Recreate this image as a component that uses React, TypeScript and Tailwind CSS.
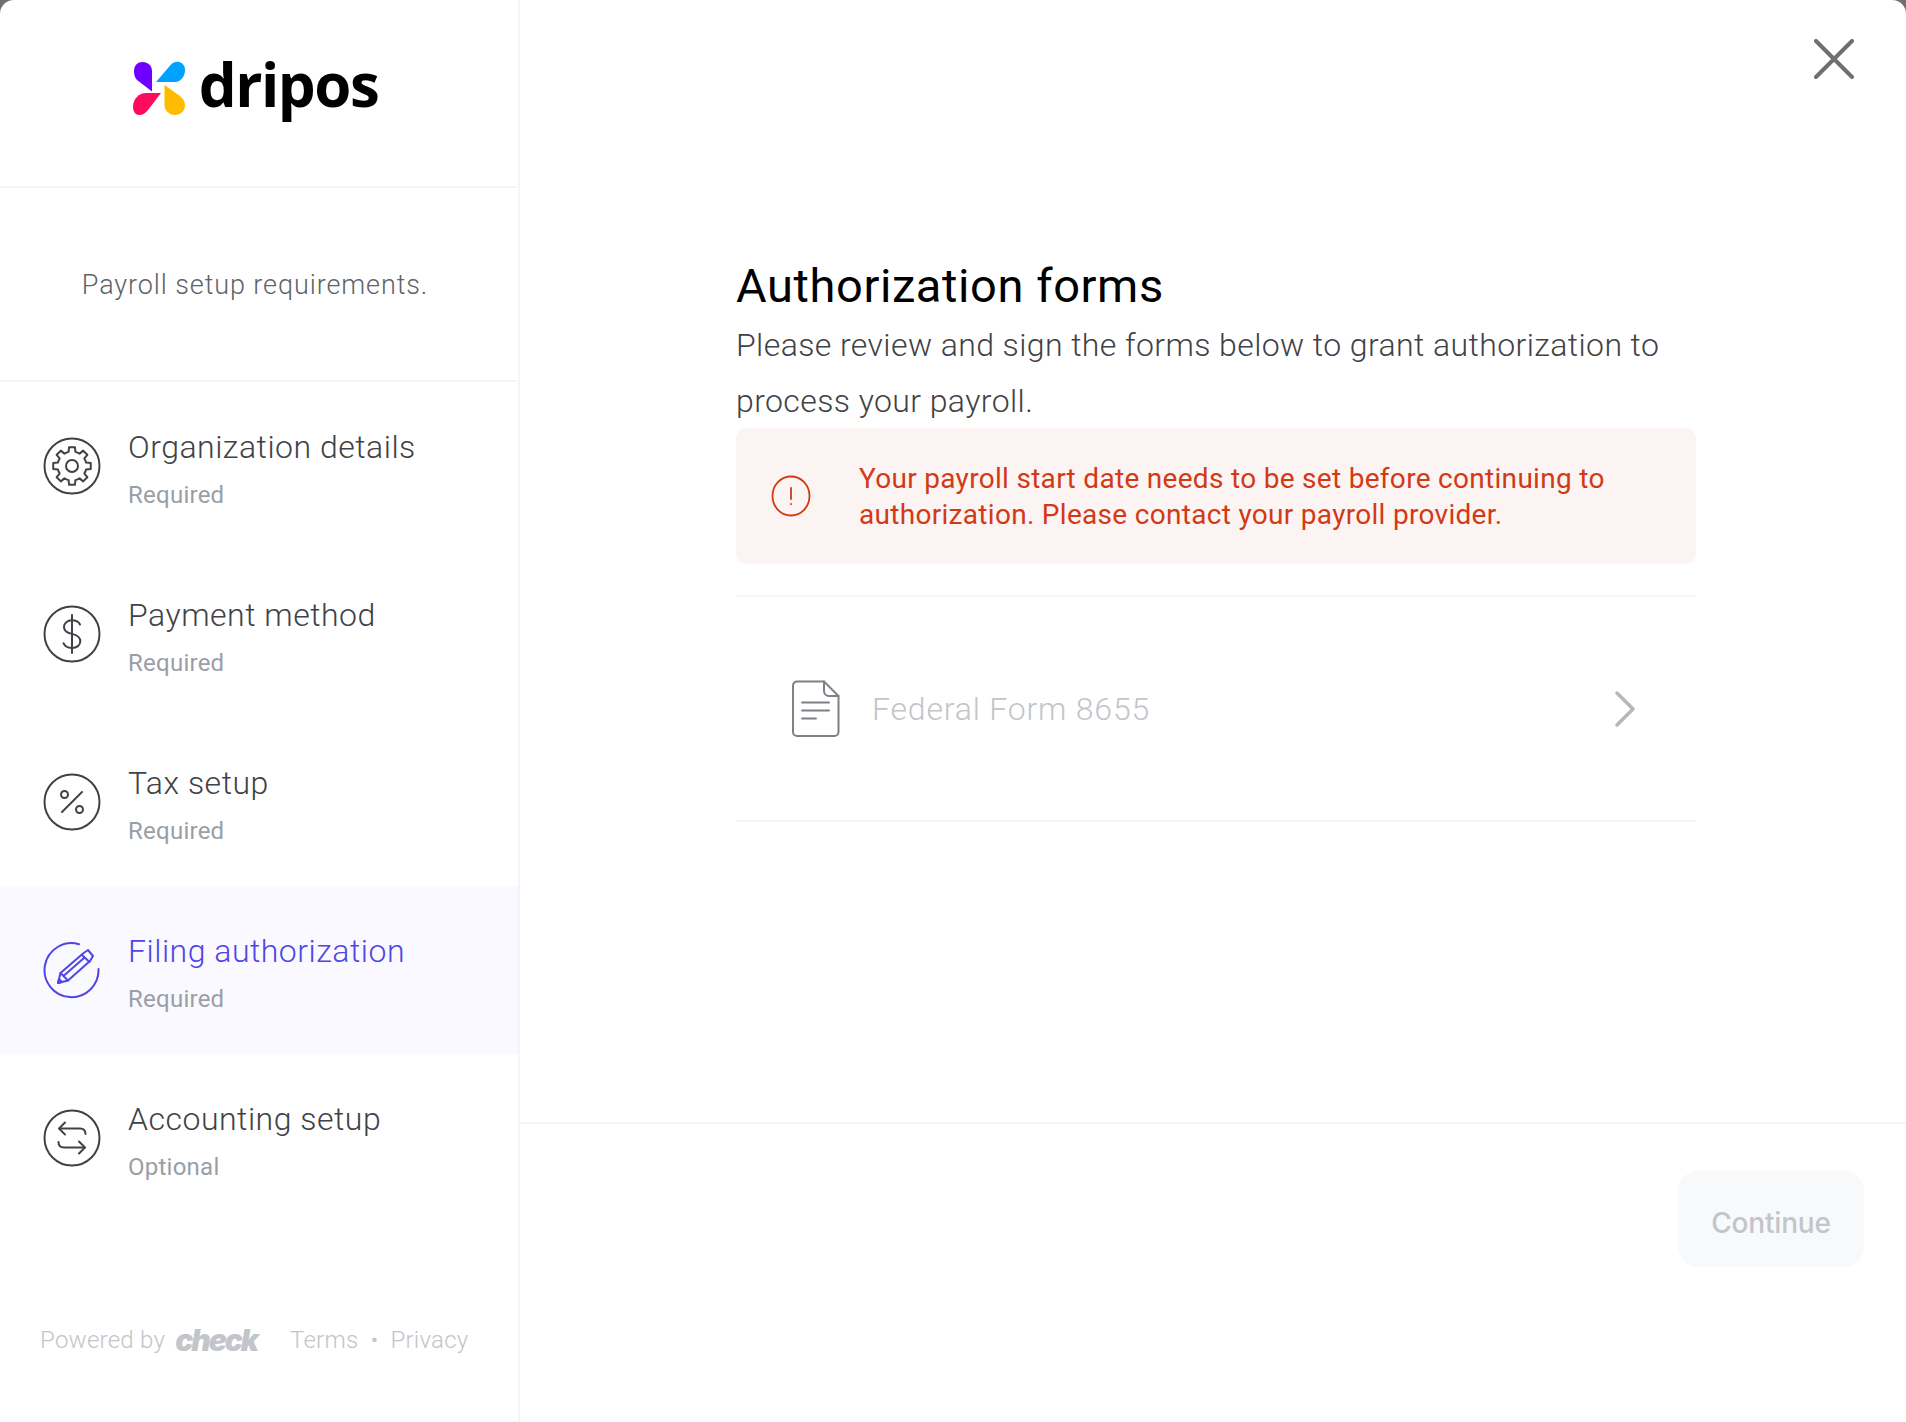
import type { ReactNode } from 'react';

function gearPath(cx: number, cy: number, outer: number, inner: number, teeth: number) {
  const step = (Math.PI * 2) / teeth;
  const pts: string[] = [];
  for (let i = 0; i < teeth; i++) {
    const a = i * step - Math.PI / 2;
    const list: [number, number][] = [
      [inner, a - step * 0.5],
      [inner, a - step * 0.3],
      [outer, a - step * 0.2],
      [outer, a + step * 0.2],
      [inner, a + step * 0.3],
    ];
    for (const [r, t] of list) {
      pts.push(`${(cx + r * Math.cos(t)).toFixed(2)} ${(cy + r * Math.sin(t)).toFixed(2)}`);
    }
  }
  return `M${pts.join('L')}Z`;
}

function Ring({ children, color = '#3f4246', ring = true }: { children: ReactNode; color?: string; ring?: boolean }) {
  return (
    <svg width="58" height="58" viewBox="0 0 58 58" fill="none" stroke={color} strokeWidth="2" strokeLinecap="round" strokeLinejoin="round" className="shrink-0">
      {ring && <circle cx="29" cy="29" r="27.500" />}
      {children}
    </svg>
  );
}

const GearIcon = () => (
  <Ring>
    <path d={gearPath(29, 29, 19, 14.5, 8)} />
    <circle cx="29" cy="29" r="6" />
  </Ring>
);

const DollarIcon = () => (
  <Ring>
    <path d="M29 10v38" />
    <path d="M37 19.500c-1.200-2.600-4-4.200-8-4.200-4.600 0-8 2.800-8 6.600 0 4 3 5.800 8 7 5.200 1.300 8.300 3.200 8.300 7.300 0 4-3.500 6.800-8.300 6.800-4.300 0-7.300-1.800-8.500-4.800" />
  </Ring>
);

const PercentIcon = () => (
  <Ring>
    <path d="M39 19 19 39" />
    <circle cx="21.500" cy="21.500" r="3.500" />
    <circle cx="36.500" cy="36.500" r="3.500" />
  </Ring>
);

const PencilIcon = () => (
  <Ring color="#4f46e5" ring={false}>
    <path d="M36 3.200A27 27 0 1 0 55.500 28" />
    <path d="M15 42 17.500 32 40 12.500 45 9 50 15 47 20 25 39.500Z" />
    <path d="M17.500 32 25 39.500M39 14 46.500 21M21 34.500 41 17" />
    <path d="M15 42 19 41 16 38Z" fill="#4f46e5" />
  </Ring>
);

const SwapIcon = () => (
  <Ring>
    <path d="M22 13.500 16 19.500 22 25.500" />
    <path d="M16.500 19.500H37c3.500 0 5.500 2 5.500 5.500" />
    <path d="M36 44.500 42 38.500 36 32.500" />
    <path d="M41.500 38.500H21c-3.500 0-5.500-2-5.500-5.500" />
  </Ring>
);

const AlertIcon = () => (
  <svg width="40" height="42" viewBox="0 0 40 42" fill="none" stroke="#d13a16" strokeWidth="1.800" strokeLinecap="round" className="shrink-0">
    <ellipse cx="20" cy="21" rx="18.500" ry="19.500" />
    <path d="M20 13v11" />
    <path d="M20 29v.2" />
  </svg>
);

const DocIcon = () => (
  <svg width="48" height="58" viewBox="0 0 48 58" fill="none" stroke="#7c8287" strokeWidth="2" strokeLinecap="round" strokeLinejoin="round" className="shrink-0">
    <path d="M5 1.500H32L46.500 16V52a4 4 0 0 1-4 4H5a4 4 0 0 1-4-4V5.500a4 4 0 0 1 4-4Z" />
    <path d="M32 1.500V11a5 5 0 0 0 5 5h9.500" />
    <path d="M10 22.500H37M10 30.500H37M10 38.500H24" />
  </svg>
);

type Step = { title: string; sub: string; icon: ReactNode; active?: boolean };

const steps: Step[] = [
  { title: 'Organization details', sub: 'Required', icon: <GearIcon /> },
  { title: 'Payment method', sub: 'Required', icon: <DollarIcon /> },
  { title: 'Tax setup', sub: 'Required', icon: <PercentIcon /> },
  { title: 'Filing authorization', sub: 'Required', icon: <PencilIcon />, active: true },
  { title: 'Accounting setup', sub: 'Optional', icon: <SwapIcon /> },
];

function StepRow({ step }: { step: Step }) {
  return (
    <div className={`flex h-[168px] items-center gap-[27px] pl-[43px] ${step.active ? 'bg-[#f9f9ff]' : ''}`}>
      {step.icon}
      <div className="flex flex-col">
        <span className={`text-[32px] leading-[44px] font-light tracking-[0.5px] ${step.active ? 'text-[#4f46e5]' : 'text-[#3f4246]'}`}>{step.title}</span>
        <span className="mt-[11px] mb-[-2px] text-[24px] leading-[30px] font-normal tracking-[0.25px] text-[#9a9ea5]">{step.sub}</span>
      </div>
    </div>
  );
}

export default function App() {
  return (
    <div className="h-[1422px] w-[1906px] bg-[#6f6f6f] font-['Roboto',sans-serif]">
      <div className="flex h-full overflow-hidden rounded-t-[14px] bg-white">
        <aside className="flex w-[520px] shrink-0 flex-col border-r-2 border-[#f3f5f7]">
          <div className="flex h-[188px] shrink-0 items-center justify-center gap-[13px] border-b-2 border-[#f3f5f7] pr-[8px] pb-[18px]">
            <svg width="54" height="54" viewBox="0 0 54 54" className="mt-[7px] shrink-0">
              <path d="M2 10C2 4 6 1 10.500 1S20 4 20 10V30.500L5 19C3 17 2 14 2 10Z" fill="#6f00ff" />
              <path d="M24 21 39 3.500C41 1.500 44 0 47 1c4 1 6 4 6 8 0 6-4 12-10 12Z" fill="#00a2ff" />
              <path d="M32.500 24 48 35c3 2.500 5 5 5 9.500 0 5.500-4.500 9.500-10 9.500-6 0-10.500-4.500-10.500-10Z" fill="#ffbb00" />
              <path d="M29 32 16 49c-2.500 3-5 5-9 5-4 0-6-4-6-8 0-8 6-14 13-14Z" fill="#ff0a5c" />
            </svg>
            <span className="font-['Open_Sans',sans-serif] text-[60px] leading-none font-bold tracking-[-1.500px] text-black">dripos</span>
          </div>
          <div className="flex h-[194px] shrink-0 items-center justify-center border-b-2 border-[#f3f5f7] pt-[2px] pr-[8px]">
            <span className="text-[27px] font-light tracking-[0.9px] text-[#5f6368]">Payroll setup requirements.</span>
          </div>
          <nav className="flex flex-col">
            {steps.map((step) => (
              <StepRow key={step.title} step={step} />
            ))}
          </nav>
          <div className="mt-[100px] flex items-center pl-[40px] text-[24px] font-light tracking-[0.25px] text-[#c2c5c9]">
            <span>Powered by</span>
            <span className="ml-[10px] font-['Inter',sans-serif] text-[30px] leading-none font-black tracking-[-2px] italic text-[#c2c5c9]">check</span>
            <span className="ml-[33px]">Terms</span>
            <span className="mx-[12px]">•</span>
            <span>Privacy</span>
          </div>
        </aside>

        <main className="flex min-w-0 flex-1 flex-col">
          <div className="flex h-[1124px] shrink-0 flex-col border-b-2 border-[#f3f5f7]">
            <div className="flex justify-end pt-[39px] pr-[52px]">
              <svg width="40" height="40" viewBox="0 0 40 40" stroke="#6f6f6f" strokeWidth="4" strokeLinecap="round">
                <path d="M2 2 38 38M38 2 2 38" />
              </svg>
            </div>
            <div className="mx-auto mt-[179px] w-[960px] translate-x-[3px]">
              <h1 className="text-[47px] leading-[56px] font-normal tracking-[0.6px] text-black">Authorization forms</h1>
              <p className="mt-[3px] text-[32px] leading-[56px] font-light tracking-[0.4px] text-[#3f4246]">
                Please review and sign the forms below to grant authorization to process your payroll.
              </p>
              <div className="mt-[-1px] flex h-[136px] items-center gap-[48px] rounded-[10px] bg-[#fcf4f2] pl-[35px]">
                <AlertIcon />
                <p className="w-[780px] pt-[2px] text-[28px] leading-[36px] tracking-[0.3px] text-[#d13a16]">
                  Your payroll start date needs to be set before continuing to authorization. Please contact your payroll provider.
                </p>
              </div>
              <div className="mt-[31px] flex h-[227px] items-center border-y-2 border-[#f3f5f7] pr-[60px] pl-[56px]">
                <DocIcon />
                <span className="ml-[32px] flex-1 text-[32px] font-light tracking-[0.8px] text-[#c2c5c9]">Federal Form 8655</span>
                <svg width="22" height="36" viewBox="0 0 22 36" fill="none" stroke="#b4b7bb" strokeWidth="3.500" strokeLinecap="round" strokeLinejoin="round">
                  <path d="M3 2 19 18 3 34" />
                </svg>
              </div>
            </div>
          </div>
          <div className="flex justify-end pt-[47px] pr-[42px]">
            <div className="flex h-[96px] w-[186px] items-center justify-center rounded-[20px] bg-[#f8f9fb] pt-[7px] font-['Inter',sans-serif] text-[28px] font-medium tracking-[-0.2px] text-[#c2c5c9]">
              Continue
            </div>
          </div>
        </main>
      </div>
    </div>
  );
}
